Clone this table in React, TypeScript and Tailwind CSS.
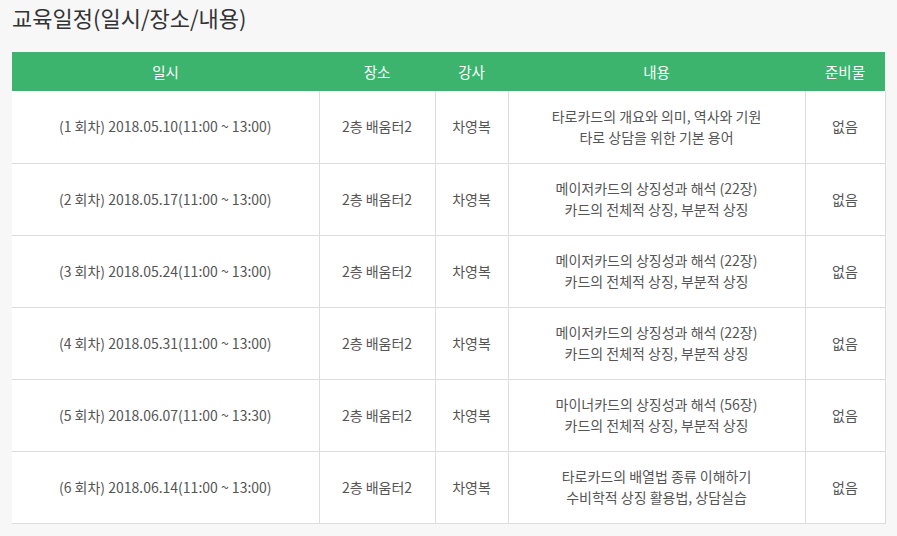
const rows = [
  { date: '(1 회차) 2018.05.10(11:00 ~ 13:00)', content: ['타로카드의 개요와 의미, 역사와 기원', '타로 상담을 위한 기본 용어'] },
  { date: '(2 회차) 2018.05.17(11:00 ~ 13:00)', content: ['메이저카드의 상징성과 해석 (22장)', '카드의 전체적 상징, 부분적 상징'] },
  { date: '(3 회차) 2018.05.24(11:00 ~ 13:00)', content: ['메이저카드의 상징성과 해석 (22장)', '카드의 전체적 상징, 부분적 상징'] },
  { date: '(4 회차) 2018.05.31(11:00 ~ 13:00)', content: ['메이저카드의 상징성과 해석 (22장)', '카드의 전체적 상징, 부분적 상징'] },
  { date: '(5 회차) 2018.06.07(11:00 ~ 13:30)', content: ['마이너카드의 상징성과 해석 (56장)', '카드의 전체적 상징, 부분적 상징'] },
  { date: '(6 회차) 2018.06.14(11:00 ~ 13:00)', content: ['타로카드의 배열법 종류 이해하기', '수비학적 상징 활용법, 상담실습'] },
];

export default function App() {
  return (
    <div
      className="min-h-[536px] bg-[#f7f7f7] px-3 pt-[2px] text-[#555]"
      style={{ fontFamily: '"Noto Sans CJK KR", "Noto Sans", sans-serif' }}
    >
      <h2 className="h-[50px] text-[22px] leading-[30px] text-[#333]">교육일정(일시/장소/내용)</h2>

      <table className="w-[873px] border-collapse table-fixed text-center text-[14px]">
        <colgroup>
          <col className="w-[307px]" />
          <col className="w-[116px]" />
          <col className="w-[73px]" />
          <col className="w-[297px]" />
          <col className="w-[80px]" />
        </colgroup>
        <thead>
          <tr className="h-[39px] bg-[#3cb46e] text-[14.5px] text-white">
            <th className="font-normal">일시</th>
            <th className="font-normal">장소</th>
            <th className="font-normal">강사</th>
            <th className="font-normal">내용</th>
            <th className="font-normal">준비물</th>
          </tr>
        </thead>
        <tbody className="bg-white">
          {rows.map((r, i) => (
            <tr key={i} className="h-[72px] border-b border-[#dcdcdc]">
              <td className="border-r border-[#dcdcdc]">{r.date}</td>
              <td className="border-r border-[#dcdcdc]">2층 배움터2</td>
              <td className="border-r border-[#dcdcdc]">차영복</td>
              <td className="border-r border-[#dcdcdc] leading-[21px]">
                {r.content[0]}
                <br />
                {r.content[1]}
              </td>
              <td className="border-r border-[#dcdcdc]">없음</td>
            </tr>
          ))}
        </tbody>
      </table>
    </div>
  );
}
